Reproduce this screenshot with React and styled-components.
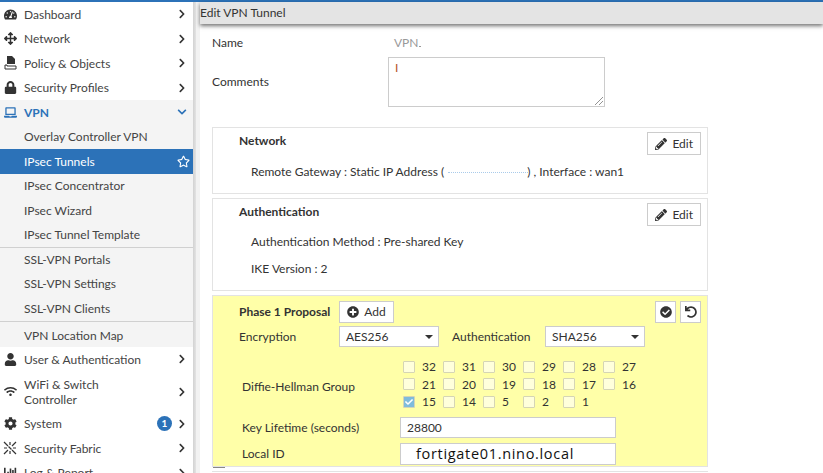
import React from "react";
import styled, { createGlobalStyle } from "styled-components";
import {
  FaTachometerAlt,
  FaArrowsAlt,
  FaLock,
  FaLaptop,
  FaUser,
  FaWifi,
  FaCog,
  FaPencilAlt,
  FaPlusCircle,
  FaCheckCircle,
  FaUndo,
  FaRegStar,
  FaChevronRight,
  FaChevronDown,
  FaChartBar,
  FaCheck,
} from "react-icons/fa";

const GlobalStyle = createGlobalStyle`
  html, body {
    margin: 0;
    padding: 0;
    background: #fff;
    font-family: Lato, "Liberation Sans", sans-serif;
    font-size: 12px;
    color: #333;
  }
`;

const Page = styled.div`
  width: 823px;
  height: 473px;
  overflow: hidden;
  display: flex;
  flex-direction: column;
  background: #fff;
`;
const TopLine = styled.div`
  height: 2px;
  flex: none;
  background: #2c72b8;
`;
const Body = styled.div`
  display: flex;
  flex: 1;
  min-height: 0;
`;
const Sidebar = styled.nav`
  width: 193px;
  flex: none;
  display: flex;
  flex-direction: column;
  padding-top: 0.2px;
`;
const Track = styled.div`
  width: 7px;
  flex: none;
  background: linear-gradient(to right, #d2d2d2, #e2e2e2 40%, #f2f2f2 45%, #f2f2f2);
`;
const MenuRow = styled.div`
  height: ${p => p.$h || 24.5}px;
  flex: none;
  display: flex;
  align-items: center;
  box-sizing: border-box;
  padding-right: 6px;
  padding-top: ${p => p.$pt || 0}px;
  background: ${p => (p.$active ? "#2c72b8" : p.$sub ? "#f4f4f4" : "#fff")};
  color: ${p => (p.$active ? "#fff" : p.$open ? "#2c72b8" : "#444")};
  font-weight: ${p => (p.$open ? 700 : 400)};
  line-height: 15px;
  border-top: ${p => (p.$divider ? "1px solid #d0d0d0" : "none")};
`;
const MenuIcon = styled.span`
  width: 24px;
  flex: none;
  display: flex;
  justify-content: center;
  padding-right: 4px;
  box-sizing: border-box;
  font-size: 13px;
  color: ${p => (p.$open ? "#2c72b8" : "#333")};
`;
const MenuLabel = styled.span`
  flex: 1;
  padding-left: ${p => (p.$sub ? 24 : 0)}px;
`;
const Arrow = styled.span`
  display: flex;
  font-size: 10px;
  color: ${p => (p.$open ? "#2c72b8" : "#333")};
`;
const Star = styled(FaRegStar)`
  font-size: 13px;
  margin-right: -3px;
`;
const Badge = styled.span`
  width: 15px;
  height: 15px;
  border-radius: 50%;
  background: #2c72b8;
  color: #fff;
  font-size: 10px;
  font-weight: 700;
  display: flex;
  align-items: center;
  justify-content: center;
  margin-right: 5px;
`;
const Main = styled.main`
  flex: 1;
  min-width: 0;
  display: flex;
  flex-direction: column;
`;
const Header = styled.header`
  height: 22px;
  flex: none;
  background: #e4e4e4;
  box-shadow: 0 2px 4px rgba(0, 0, 0, 0.55);
  line-height: 22px;
  position: relative;
`;
const Content = styled.div`
  width: 496px;
  margin-left: 12px;
  display: flex;
  flex-direction: column;
`;
const NameRow = styled.div`
  height: 27px;
  display: flex;
  align-items: flex-end;
`;
const FieldLabel = styled.span`
  width: 176px;
  flex: none;
  line-height: 16px;
`;
const NameValue = styled.span`
  margin-left: 6px;
  color: #999;
  line-height: 16px;
  &::after {
    content: "";
    display: inline-block;
    width: 2px;
    border-bottom: 1px solid #999;
  }
`;
const CommentsRow = styled.div`
  display: flex;
  align-items: center;
  margin-top: 6px;
`;
const Comments = styled.div`
  width: 217px;
  height: 50px;
  box-sizing: border-box;
  border: 1px solid #ccc;
  position: relative;
  color: #b5502a;
  padding: 2px 6px;
  line-height: 16px;
`;
const Grip = styled.svg`
  position: absolute;
  right: 0;
  bottom: 0;
`;
const Card = styled.section`
  box-sizing: border-box;
  height: ${p => p.$h}px;
  flex: none;
  border: 1px solid #e3e3e3;
  margin-top: ${p => p.$mt || 4}px;
  padding: 4px 6px 0 26px;
  background: ${p => (p.$edit ? "#ffffa8" : "#fff")};
`;
const CardHead = styled.div`
  display: flex;
  justify-content: space-between;
  align-items: center;
  height: 23px;
`;
const CardTitle = styled.span`
  font-weight: 700;
  margin-top: -6px;
`;
const Detail = styled.div`
  padding-left: 12px;
  line-height: 16px;
  margin-top: ${p => p.$mt}px;
`;
const Button = styled.span`
  height: ${p => p.$h || 23}px;
  box-sizing: border-box;
  border: 1px solid #ccc;
  background: #fff;
  display: inline-flex;
  align-items: center;
  justify-content: center;
  gap: 5px;
  padding: 0 7px;
  color: #333;
  svg {
    font-size: 12px;
  }
`;
const IconButton = styled(Button)`
  width: 21px;
  padding: 0;
`;
const HeadLeft = styled.div`
  display: flex;
  align-items: center;
  gap: 9px;
  ${CardTitle} {
    margin-top: 0;
  }
`;
const HeadRight = styled.div`
  display: flex;
  gap: 4px;
`;
const SelectRow = styled.div`
  display: flex;
  align-items: center;
  margin-top: 3px;
  height: 21px;
`;
const SelectLabel = styled.span`
  width: ${p => p.$w}px;
  padding-left: ${p => p.$pl || 0}px;
  box-sizing: border-box;
  flex: none;
`;
const Select = styled.span`
  width: ${p => p.$w}px;
  height: 21px;
  box-sizing: border-box;
  flex: none;
  border: 1px solid #ccc;
  background: #fff;
  display: flex;
  align-items: center;
  justify-content: space-between;
  padding: 0 5px 0 6px;
  &::after {
    content: "";
    border-left: 4px solid transparent;
    border-right: 4px solid transparent;
    border-top: 4px solid #333;
  }
`;
const DhRow = styled.div`
  display: flex;
  align-items: center;
  margin-top: 11px;
`;
const DhLabel = styled.span`
  width: 164px;
  flex: none;
  padding: 4px 0 0 3px;
  box-sizing: border-box;
`;
const DhGrid = styled.div`
  display: grid;
  grid-template-columns: repeat(6, 40px);
  grid-auto-rows: 17.5px;
`;
const DhItem = styled.label`
  display: flex;
  align-items: center;
  gap: 7px;
`;
const Box = styled.span`
  width: 12px;
  height: 12px;
  box-sizing: border-box;
  border: 1px solid #d5d5b5;
  border-radius: 1px;
  background: ${p => (p.$on ? "#7fbbdc" : "#ffffdc")};
  color: #fff;
  font-size: 8px;
  display: flex;
  align-items: center;
  justify-content: center;
`;
const InputRow = styled.div`
  display: flex;
  align-items: center;
  margin-top: ${p => p.$mt}px;
`;
const InputLabel = styled.span`
  width: 161px;
  flex: none;
  padding-left: 3px;
  box-sizing: border-box;
`;
const Input = styled.span`
  width: 216px;
  height: ${p => p.$h}px;
  box-sizing: border-box;
  border: 1px solid #ccc;
  background: #fff;
  display: flex;
  align-items: center;
  padding-left: ${p => p.$pl}px;
`;
const LocalId = styled(Input)`
  font-family: "Open Sans", "DejaVu Sans", sans-serif;
  font-size: 14.5px;
  letter-spacing: 0.68px;
  color: #111;
`;
const Redacted = styled.span`
  display: inline-block;
  width: 80px;
  height: 1px;
  vertical-align: middle;
  margin: 0 -1px 0 4px;
  border-top: 1px dotted #a9cbea;
`;
const CardTick = styled.div`
  width: 12px;
  height: 1px;
  flex: none;
  margin-left: 1px;
  background: #888;
`;
const NextCard = styled.section`
  height: 10px;
  flex: none;
  margin-top: 3px;
  border-top: 1px solid #e3e3e3;
`;

function PolicyIcon() {
  return (
    <svg width="13" height="14" viewBox="0 0 13 14" fill="currentColor">
      <path d="M3 0h5l3 3v5H3z" />
      <path d="M1 9h2v1h9v3H1z" fill="none" stroke="currentColor" />
    </svg>
  );
}

function FabricIcon() {
  return (
    <svg width="14" height="14" viewBox="0 0 14 14" stroke="currentColor" fill="none" strokeWidth="1.2">
      <path d="M1 1l4 4M13 1L9 5M1 13l4-4M13 13L9 9M7 1v3M7 10v3M1 7h3M10 7h3M5.5 5.5l3 3" />
    </svg>
  );
}

const menuTop = [
  { label: "Dashboard", icon: <FaTachometerAlt /> },
  { label: "Network", icon: <FaArrowsAlt /> },
  { label: "Policy & Objects", icon: <PolicyIcon /> },
  { label: "Security Profiles", icon: <FaLock /> },
];
const vpnItems = [
  { label: "Overlay Controller VPN" },
  { label: "IPsec Tunnels", active: true },
  { label: "IPsec Concentrator" },
  { label: "IPsec Wizard" },
  { label: "IPsec Tunnel Template" },
  { label: "SSL-VPN Portals", divider: true },
  { label: "SSL-VPN Settings" },
  { label: "SSL-VPN Clients" },
  { label: "VPN Location Map", divider: true, h: 26.5, pt: 2 },
];
const dhGroups = [32, 31, 30, 29, 28, 27, 21, 20, 19, 18, 17, 16, 15, 14, 5, 2, 1];

function SubRow({ item }) {
  return (
    <MenuRow $sub $active={item.active} $divider={item.divider} $h={item.h} $pt={item.pt}>
      <MenuLabel $sub>{item.label}</MenuLabel>
      {item.active && <Star />}
    </MenuRow>
  );
}

function TopRow({ label, icon, h, badge }) {
  return (
    <MenuRow $h={h}>
      <MenuIcon>{icon}</MenuIcon>
      <MenuLabel>{label}</MenuLabel>
      {badge && <Badge>{badge}</Badge>}
      <Arrow><FaChevronRight /></Arrow>
    </MenuRow>
  );
}

export default function App() {
  return (
    <Page>
      <GlobalStyle />
      <TopLine />
      <Body>
        <Sidebar>
          {menuTop.map(item => (
            <TopRow key={item.label} label={item.label} icon={item.icon} />
          ))}
          <MenuRow $sub $open>
            <MenuIcon $open><FaLaptop /></MenuIcon>
            <MenuLabel>VPN</MenuLabel>
            <Arrow $open><FaChevronDown /></Arrow>
          </MenuRow>
          {vpnItems.map(item => (
            <SubRow key={item.label} item={item} />
          ))}
          <TopRow label="User & Authentication" icon={<FaUser />} />
          <TopRow label={<>WiFi & Switch<br />Controller</>} icon={<FaWifi />} h={40} />
          <TopRow label="System" icon={<FaCog />} badge="1" />
          <TopRow label="Security Fabric" icon={<FabricIcon />} />
          <TopRow label="Log & Report" icon={<FaChartBar />} />
        </Sidebar>
        <Track />
        <Main>
          <Header>Edit VPN Tunnel</Header>
          <Content>
            <NameRow>
              <FieldLabel>Name</FieldLabel>
              <NameValue>VPN</NameValue>
            </NameRow>
            <CommentsRow>
              <FieldLabel>Comments</FieldLabel>
              <Comments>
                I
                <Grip width="10" height="10" viewBox="0 0 10 10" stroke="#777" strokeWidth="0.8">
                  <path d="M1 9l8-8M5 9l4-4" />
                </Grip>
              </Comments>
            </CommentsRow>
            <Card $h={67} $mt={20}>
              <CardHead>
                <CardTitle>Network</CardTitle>
                <Button><FaPencilAlt />Edit</Button>
              </CardHead>
              <Detail $mt={9}>
                Remote Gateway : Static IP Address (<Redacted />) , Interface : wan1
              </Detail>
            </Card>
            <Card $h={93}>
              <CardHead>
                <CardTitle>Authentication</CardTitle>
                <Button><FaPencilAlt />Edit</Button>
              </CardHead>
              <Detail $mt={8}>Authentication Method : Pre-shared Key</Detail>
              <Detail $mt={11}>IKE Version : 2</Detail>
            </Card>
            <Card $h={172} $edit>
              <CardHead>
                <HeadLeft>
                  <CardTitle>Phase 1 Proposal</CardTitle>
                  <Button $h={22}><FaPlusCircle />Add</Button>
                </HeadLeft>
                <HeadRight>
                  <IconButton $h={22}><FaCheckCircle /></IconButton>
                  <IconButton $h={22}><FaUndo /></IconButton>
                </HeadRight>
              </CardHead>
              <SelectRow>
                <SelectLabel $w={100}>Encryption</SelectLabel>
                <Select $w={100}>AES256</Select>
                <SelectLabel $w={106} $pl={13}>Authentication</SelectLabel>
                <Select $w={100}>SHA256</Select>
              </SelectRow>
              <DhRow>
                <DhLabel>Diffie-Hellman Group</DhLabel>
                <DhGrid>
                  {dhGroups.map(g => (
                    <DhItem key={g}>
                      <Box $on={g === 15}>{g === 15 && <FaCheck />}</Box>
                      {g}
                    </DhItem>
                  ))}
                </DhGrid>
              </DhRow>
              <InputRow $mt={6}>
                <InputLabel>Key Lifetime (seconds)</InputLabel>
                <Input $h={21} $pl={6}>28800</Input>
              </InputRow>
              <InputRow $mt={5}>
                <InputLabel>Local ID</InputLabel>
                <LocalId $h={22} $pl={15}>fortigate01.nino.local</LocalId>
              </InputRow>
            </Card>
            <CardTick />
            <NextCard />
          </Content>
        </Main>
      </Body>
    </Page>
  );
}
